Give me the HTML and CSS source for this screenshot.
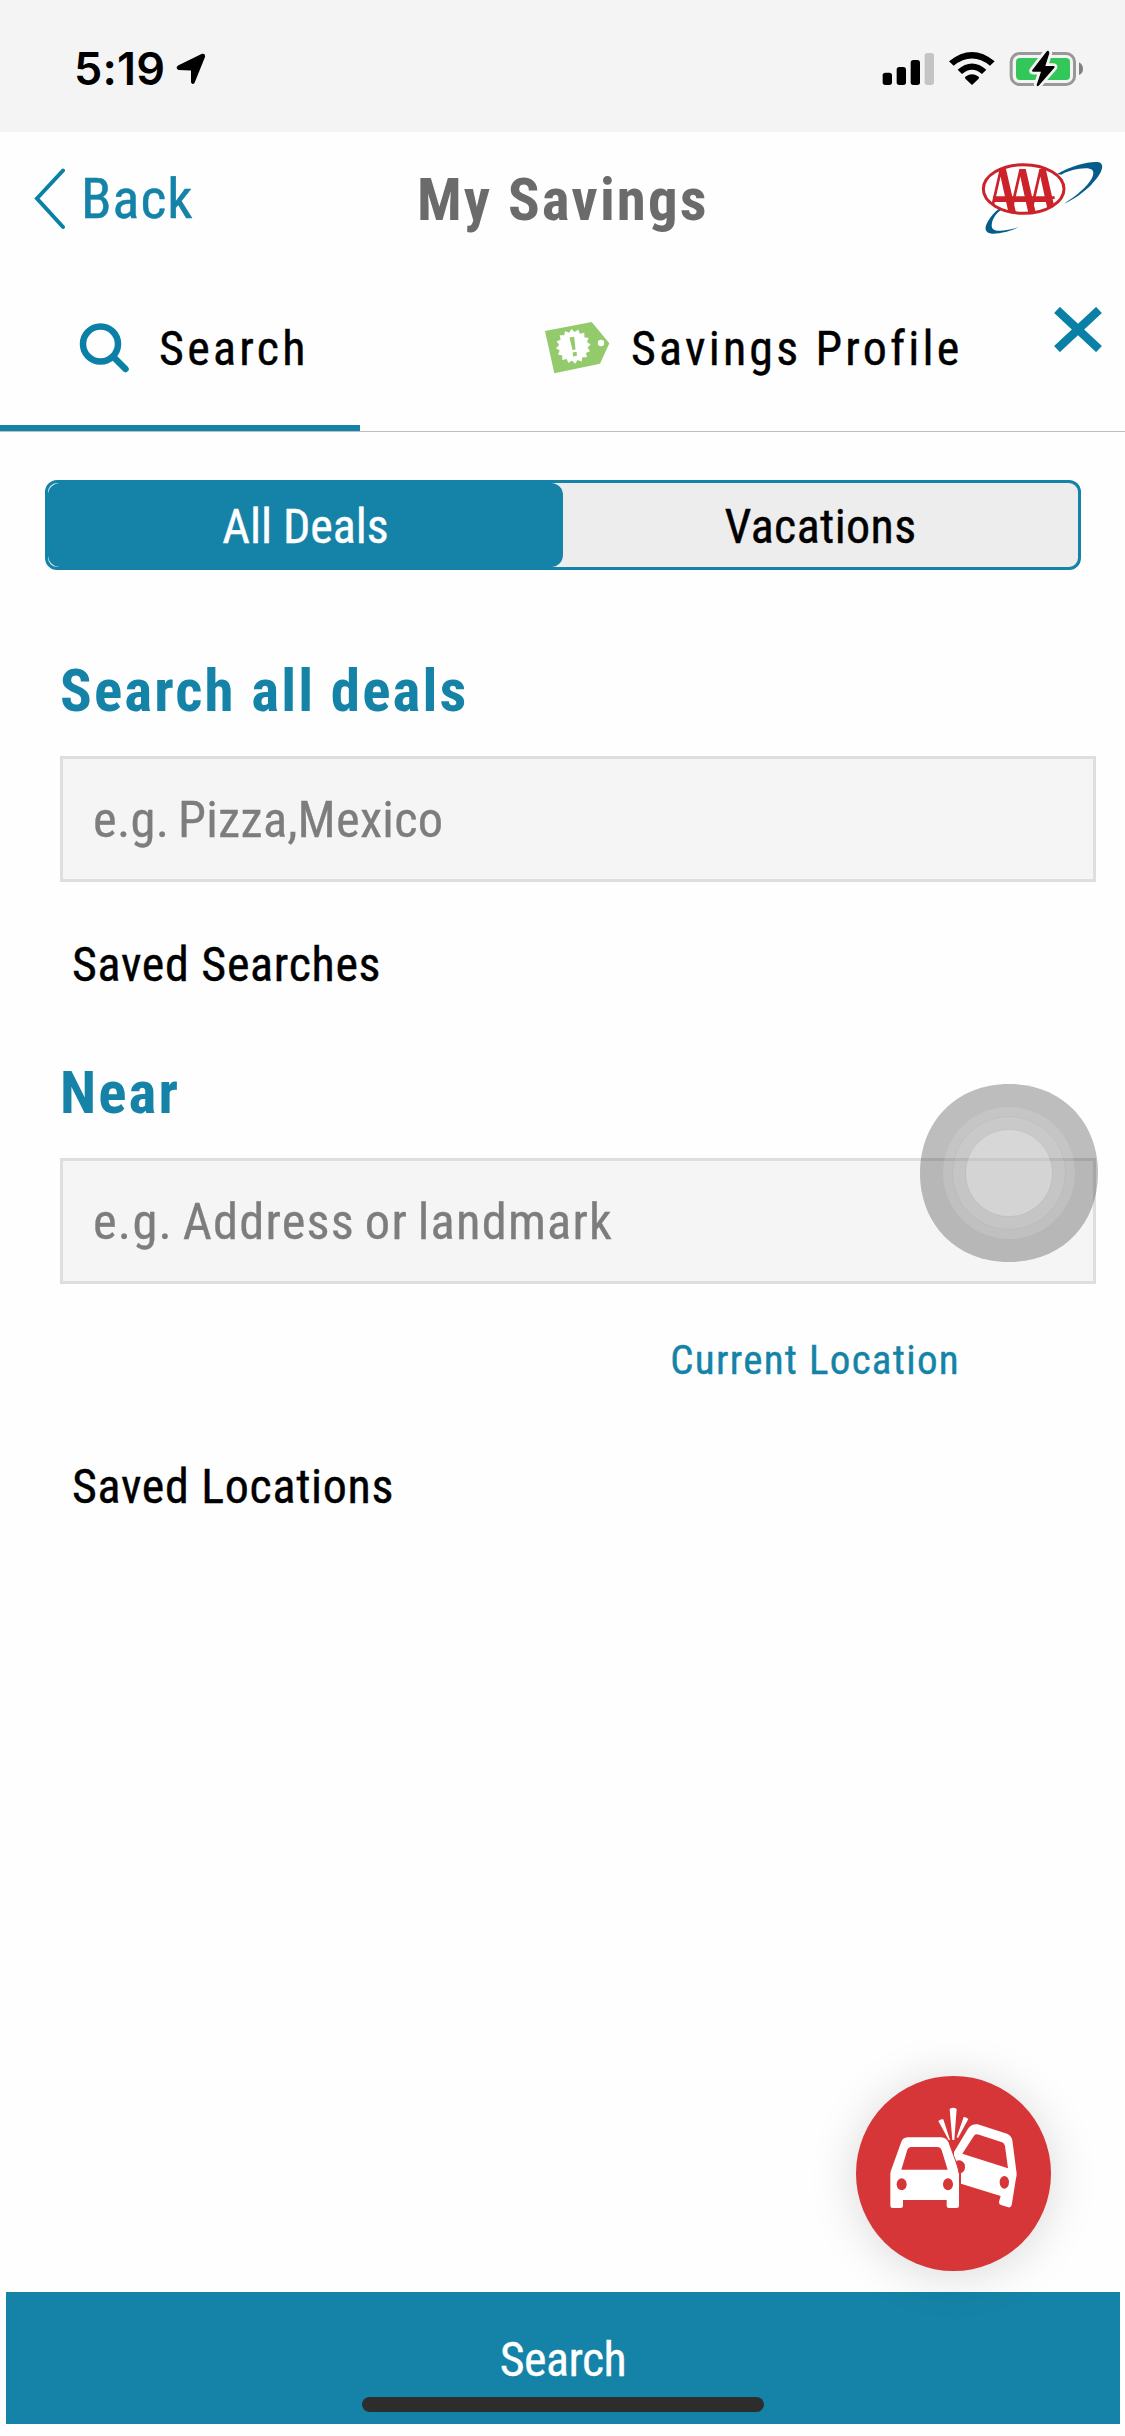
FILE: index.html
```html
<!DOCTYPE html>
<html lang="en">
<head>
<meta charset="utf-8">
<title>My Savings</title>
<link rel="stylesheet" href="styles.css">
</head>
<body>
<div class="screen">
  <header class="status">
    <span class="time">5:19</span>
    <svg class="locate" viewBox="0 0 30 32"><path d="M2 12.500 26 .8Q29.500 0 29 4L18.500 30Q16.500 32 15 29.500V17.500L2.500 17Q-1 15 2 12.500Z"/></svg>
    <svg class="indicators" viewBox="0 0 645 180">
      <rect x="23" y="98" width="28" height="37" rx="8"/>
      <rect x="65" y="81" width="28" height="54" rx="8"/>
      <rect x="107" y="60" width="28" height="75" rx="8"/>
      <rect x="149" y="39" width="28" height="96" rx="8" fill="#c4c4c4"/>
      <path d="M291 135 271 116Q268 112 273 109 291 97 309 109 314 112 311 116Z"/>
      <path d="M248 89Q291 52 334 89L321 102Q291 76 261 102Z"/>
      <path d="M222 64Q291 8 359 64L345 77Q291 34 236 77Z"/>
      <rect x="408.500" y="40.500" width="190" height="93" rx="25" fill="none" stroke="#989898" stroke-width="9"/>
      <path d="M612 67Q624 74 624 87T612 105Z" fill="#808080"/>
      <rect x="423" y="54" width="162" height="66" rx="12" fill="#33c759"/>
      <path d="M516 33 472 90Q469 95 475 95H498L485 134Q485 141 491 137L538 83Q541 78 535 78H511L523 40Q523 29 516 33Z" stroke="#f4f4f4" stroke-width="17"/>
      <path d="M516 33 472 90Q469 95 475 95H498L485 134Q485 141 491 137L538 83Q541 78 535 78H511L523 40Q523 29 516 33Z"/>
    </svg>
  </header>

  <nav class="nav">
    <a class="back"><svg class="chevron" viewBox="0 0 32 62"><path d="M29 2.500 3 30.500 29 59"/></svg><span>Back</span></a>
    <h1 class="title">My Savings</h1>
    <svg class="logo" viewBox="0 0 495 330">
      <defs><clipPath id="oval"><ellipse cx="191" cy="147" rx="116" ry="72"/></clipPath></defs>
      <path d="M291 102C340 74 395 62 417 67 438 74 422 106 394 134 370 158 338 180 312 191 350 167 384 138 396 114 410 84 386 82 358 86 335 89 316 96 304 104Z" fill="#045c8b"/>
      <path d="M126 208C109 219 98 236 96 249 92 268 102 273 122 272 142 271 161 266 176 261 152 274 120 282 95 281 74 279 72 264 84 244 92 230 104 216 116 207Z" fill="#045c8b"/>
      <ellipse cx="191" cy="147" rx="121" ry="73" fill="#fff" stroke="#cc2229" stroke-width="9"/>
      <g clip-path="url(#oval)"><text class="logo-text" x="132" y="233" transform="scale(.6 1)" textLength="362" lengthAdjust="spacing">AAA</text></g>
      <path d="M100 169H284V177H100Z" fill="#cc2229"/>
    </svg>
  </nav>

  <div class="tabs">
    <a class="tab tab-search">
      <svg class="magnifier" viewBox="0 0 52 50"><circle cx="21.500" cy="21" r="17.500"/><path d="M34.500 34 46.500 46"/></svg>
      <span>Search</span>
    </a>
    <a class="tab tab-profile">
      <svg class="tag" viewBox="4 10 68 54">
        <path d="M5 20 51.700 11 69.300 32.300 60 52.700 14.300 62.300Z" fill="#92ca6c"/>
        <path transform="translate(33.300 35.300) rotate(-6) scale(17.500)" fill="#fff" d="M0-1 .16-.8.38-.92.45-.68.71-.71.68-.45.92-.38.8-.16 1 0 .8.16.92.38.68.45.71.71.45.68.38.92.16.8 0 1-.16.8-.38.92-.45.68-.71.71-.68.45-.92.38-.8.16-1 0-.8-.16-.92-.38-.68-.45-.71-.71-.45-.68-.38-.92-.16-.8Z"/>
        <path d="M29.500 26.500 34.200 25.700 35.500 38.500 32.500 39ZM32.600 41.500 36.500 40.800 37 44.700 33.200 45.400Z" fill="#92ca6c"/>
        <circle cx="61" cy="32" r="3.200" fill="#fff"/>
      </svg>
      <span>Savings Profile</span>
    </a>
    <svg class="close" viewBox="0 0 48 45"><path d="M3 3 45 42M45 3 3 42"/></svg>
  </div>

  <main class="content">
    <div class="segments">
      <span class="segment selected">All Deals</span>
      <span class="segment">Vacations</span>
    </div>
    <div class="form">
      <h2 class="heading">Search all deals</h2>
      <div class="field">e.g. Pizza,Mexico</div>
      <p class="saved saved-searches">Saved Searches</p>
      <h2 class="heading near">Near</h2>
      <div class="field field-near">e.g. Address or landmark</div>
      <a class="current">Current Location</a>
      <p class="saved saved-locations">Saved Locations</p>
    </div>
  </main>

  <footer class="submit"><span>Search</span></footer>

  <div class="home-indicator"></div>
  <svg class="touch" viewBox="0 0 178 178">
    <path d="M89 0C142 0 178 38 178 89S142 178 89 178 0 140 0 89 36 0 89 0Z" fill="#1e1e1e" fill-opacity=".29"/>
    <circle cx="89" cy="89" r="66" fill="#fff" fill-opacity=".13"/>
    <circle cx="89" cy="89" r="56.500" fill="#fff" fill-opacity=".08" stroke="#000" stroke-opacity=".04"/>
    <circle cx="89" cy="89" r="43.500" fill="#fff" fill-opacity=".26" stroke="#000" stroke-opacity=".05"/>
  </svg>
  <div class="crash">
    <svg viewBox="108 107 585 585">
      <g fill="#fff">
        <path fill-rule="evenodd" d="M262 291H364Q378 292 385 305L414 385Q417 392 417 402V496Q417 503 410 503H387Q380 503 380 496V479H249V496Q249 503 242 503H218Q211 503 211 496V402Q211 392 216 382L244 304Q249 292 262 291ZM273 320Q265 320 262 328L244 388H383L365 330Q361 320 352 320Z"/>
        <path fill-rule="evenodd" d="M473 252 561 280Q575 286 577 300L590 400Q590 407 588 414L575 495Q572 503 565 501L543 494Q536 492 537 484L542 467 423 430V400L402 345V335L443 267Q453 250 473 252ZM477 283Q468 279 462 286L427 340 564 384 555 317Q553 308 546 306Z"/>
        <path d="M389 206Q399 199 410 206L403 299H397ZM355 242Q362 235 370 237L390 299H386ZM431 230Q439 230 445 236L414 293 410 291Z"/>
      </g>
      <path d="M408 362Q424 354 434 372 439 391 423 399H416Z" fill="#d73639"/>
      <g fill="#d73639"><ellipse cx="245" cy="432" rx="15" ry="18"/><ellipse cx="384" cy="432" rx="15" ry="18"/><ellipse cx="553" cy="426" rx="14" ry="19"/></g>
    </svg>
  </div>
</div>
</body>
</html>
```
FILE: styles.css
```css
* { box-sizing: border-box; margin: 0; padding: 0; }

body {
  background: #fff;
  font-family: Roboto, "Open Sans", sans-serif;
  font-stretch: 75%;
  color: #000;
}

svg { display: block; flex: none; }

.screen {
  position: relative;
  width: 1125px;
  height: 2436px;
  display: flex;
  flex-direction: column;
  background: #fefefe;
  overflow: hidden;
  white-space: nowrap;
}

/* Status bar */
.status {
  height: 132px;
  display: flex;
  align-items: flex-start;
  background: #f4f4f4;
}
.time {
  width: 102px;
  margin-left: 74px;
  padding-top: 39px;
  font: 600 45px/60px Inter, sans-serif;
  letter-spacing: .2px;
}
.locate { width: 30px; height: 32px; margin-top: 53px; }
.indicators { width: 215px; height: 60px; margin: 40px 35px 0 auto; }

/* Navigation */
.nav {
  height: 138px;
  display: grid;
  grid-template-columns: 417px 1fr 165px;
  align-items: center;
  background: #fefefe;
}
.back {
  display: flex;
  align-items: center;
  gap: 15px;
  padding: 0 0 5px 34px;
  color: #1583a7;
  font-size: 56px;
  line-height: 66px;
  letter-spacing: 1px;
  -webkit-text-stroke: .5px;
}
.chevron { width: 32px; height: 62px; fill: none; stroke: #0b80a6; stroke-width: 4; stroke-linecap: round; }
.title {
  padding-bottom: 2px;
  font-size: 59px;
  line-height: 66px;
  font-weight: 700;
  letter-spacing: 2.1px;
  color: #6b6b6b;
}
.logo { width: 165px; height: 110px; align-self: start; margin-top: 8px; }
.logo-text { font: 700 225px "Liberation Serif", serif; fill: #cc2229; }

/* Tabs */
.tabs {
  height: 162px;
  display: flex;
  border-bottom: 1px solid #bdbdbd;
}
.tab { display: flex; align-items: center; font-size: 48px; line-height: 60px; -webkit-text-stroke: .4px; }
.tab span { padding-top: 3px; }
.tab-search {
  width: 360px;
  padding-left: 79px;
  gap: 28px;
  letter-spacing: 3.3px;
  border-bottom: 6px solid #1583a7;
}
.tab-profile { width: 695px; padding: 0 0 6px 184px; gap: 19px; letter-spacing: 3.2px; }
.magnifier { width: 52px; height: 50px; fill: none; stroke: #0b80a6; stroke-width: 6.500; stroke-linecap: round; }
.tag { width: 68px; height: 54px; }
.close { width: 48px; height: 45px; margin: 37px 0 0 -1px; fill: none; stroke: #0b80a6; stroke-width: 8.500; }

/* Search form */
.content { padding: 48px 0 0 45px; flex: 1; }
.segments {
  width: 1036px;
  height: 90px;
  display: flex;
  border: 3px solid #1583a7;
  border-radius: 12px;
  background: #ededed;
  font-size: 48px;
  letter-spacing: .4px;
  -webkit-text-stroke: .4px;
}
.segment { flex: 1; padding-top: 3px; border-radius: 12px; line-height: 82px; text-align: center; }
.selected { background: #1583a7; color: #fff; letter-spacing: 0; }
.form { display: flex; flex-direction: column; padding: 86px 29px 0 15px; }
.heading { font-size: 59px; line-height: 70px; font-weight: 700; letter-spacing: 2.1px; color: #1583a7; }
.field {
  height: 126px;
  margin-top: 30px;
  padding-left: 30px;
  border: 3px solid #dedede;
  background: #f5f5f5;
  color: #7d7d7d;
  font-size: 50.500px;
  line-height: 122px;
  letter-spacing: .25px;
  word-spacing: -3px;
  -webkit-text-stroke: .3px;
}
.saved { font-size: 48px; line-height: 60px; padding-left: 12px; letter-spacing: .7px; -webkit-text-stroke: .4px; }
.saved-searches { margin-top: 53px; }
.near { margin-top: 63px; }
.field-near { letter-spacing: 1.2px; }
.current {
  margin: 51px 136px 0 0;
  align-self: flex-end;
  color: #1583a7;
  font-size: 41px;
  line-height: 50px;
  letter-spacing: 1.3px;
  -webkit-text-stroke: .4px;
}
.saved-locations { margin-top: 72px; }

/* Bottom button */
.submit {
  height: 132px;
  margin: 0 5px 12px 6px;
  padding-top: 3px;
  background: #1583a7;
  color: #fff;
  font-size: 48px;
  line-height: 130px;
  letter-spacing: -.6px;
  text-align: center;
  -webkit-text-stroke: .3px;
}

/* Floating overlays */
.home-indicator {
  position: absolute;
  left: 362px;
  top: 2397px;
  width: 402px;
  height: 15px;
  border-radius: 8px;
  background: #2d2d2d;
}
.touch { position: absolute; left: 920px; top: 1084px; width: 178px; height: 178px; }
.crash {
  position: absolute;
  left: 856px;
  top: 2076px;
  width: 195px;
  height: 195px;
  border-radius: 50%;
  background: #d73639;
  box-shadow: 0 4px 48px rgba(0, 0, 0, .15);
}
```
